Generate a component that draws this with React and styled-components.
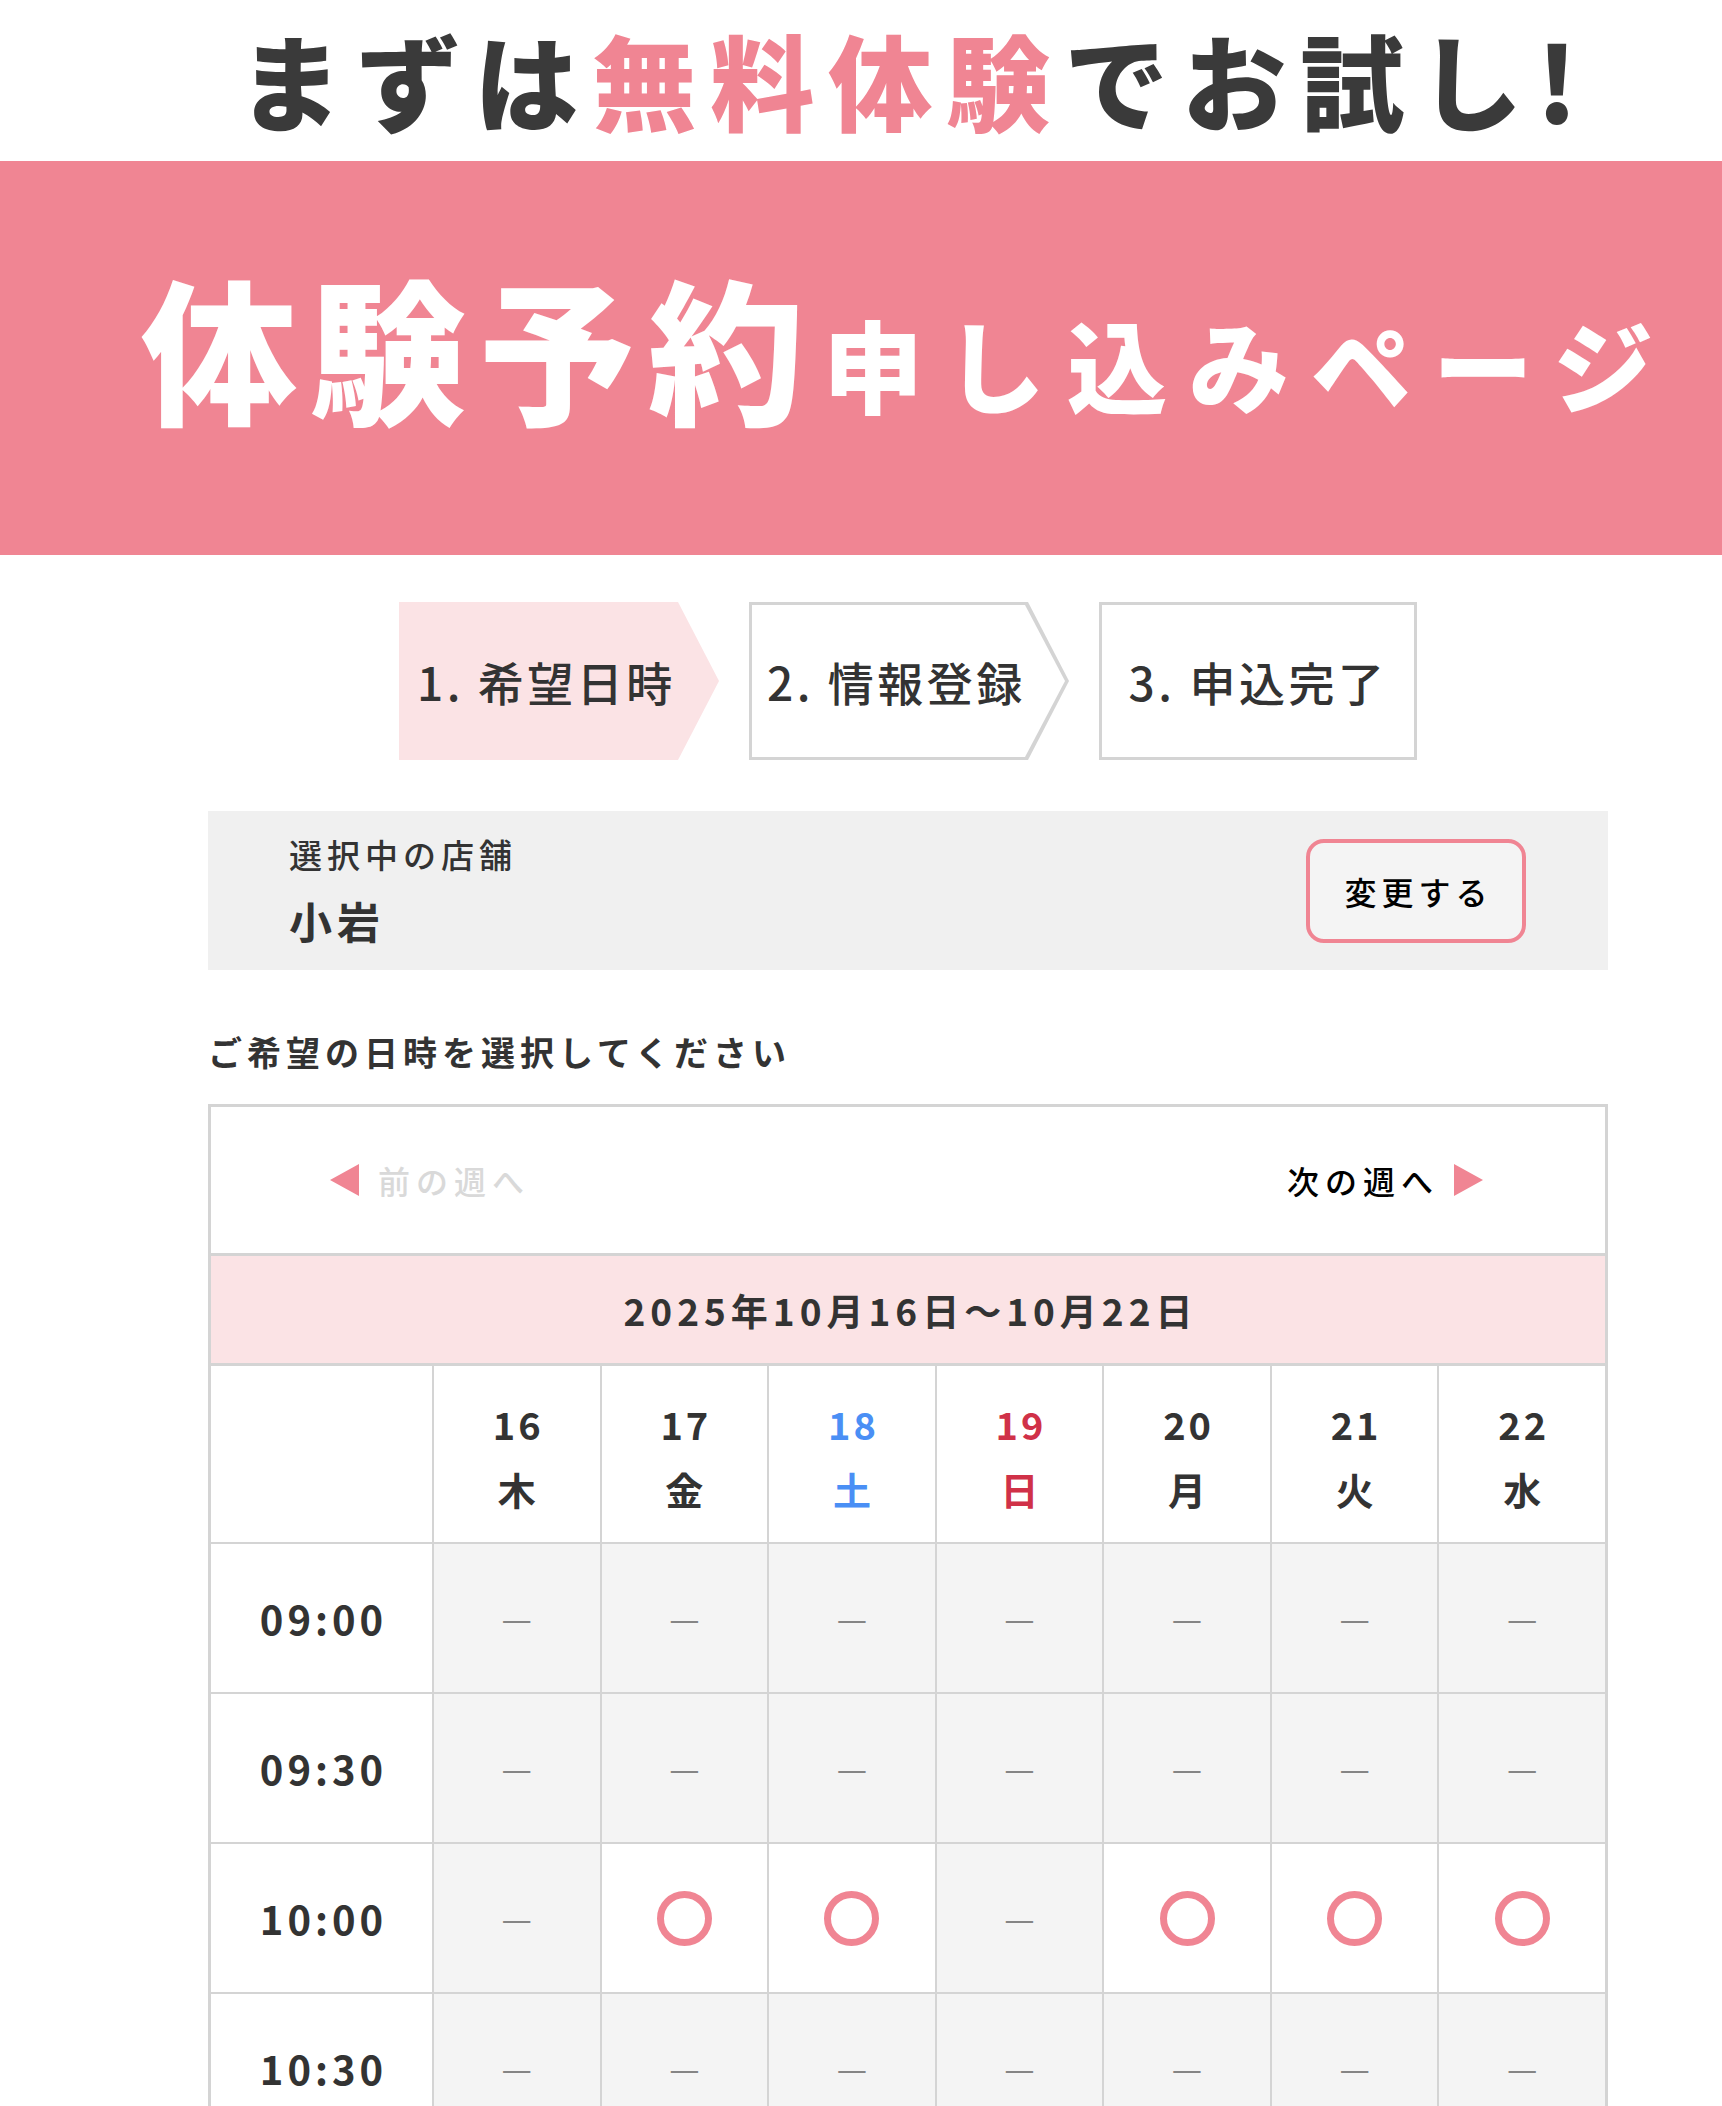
import React from 'react';
import styled, { createGlobalStyle, css } from 'styled-components';

const PINK = '#f08593';
const PINK_LIGHT = '#fbe3e5';
const TEXT = '#333333';
const LINE = '#d4d4d4';

const GlobalStyle = createGlobalStyle`
  * { box-sizing: border-box; }
  html, body { margin: 0; padding: 0; background: #fff; }
  body {
    font-family: "Noto Sans CJK JP", "Noto Sans", sans-serif;
    color: ${TEXT};
    overflow: hidden;
  }
`;

const Page = styled.div`
  width: 1722px;
`;

const Column = styled.div`
  width: 1400px;
  margin-left: 208px;
`;

const TopTitle = styled.h1`
  margin: 0;
  height: 161px;
  display: flex;
  align-items: center;
  justify-content: center;
  padding-left: 14px;
  padding-bottom: 4px;
  font-size: 104px;
  font-weight: 900;
  letter-spacing: 14px;
  line-height: 1;
  color: #3a3a3a;
  white-space: nowrap;
`;

const Accent = styled.span`
  color: ${PINK};
`;

const Banner = styled.div`
  height: 394px;
  background: ${PINK};
  display: flex;
  align-items: center;
  padding-left: 141px;
  padding-bottom: 26px;
`;

const BannerLine = styled.div`
  display: flex;
  align-items: baseline;
  color: #fff;
  font-weight: 900;
  line-height: 1;
  white-space: nowrap;
`;

const BannerBig = styled.span`
  font-size: 156px;
  letter-spacing: 13px;
`;

const BannerSmall = styled.span`
  position: relative;
  top: -7px;
  font-size: 100px;
  letter-spacing: 22px;
  margin-left: 6px;
`;

const Steps = styled.div`
  display: flex;
  justify-content: center;
  gap: 30px;
  margin-top: 47px;
`;

const arrow = (depth) =>
  `polygon(0 0, calc(100% - ${depth}px) 0, 100% 50%, calc(100% - ${depth}px) 100%, 0 100%)`;

const Step = styled.div`
  position: relative;
  width: 320px;
  height: 158px;
  display: flex;
  align-items: center;
  padding-left: 18px;
  font-size: 46px;
  font-weight: 500;
  letter-spacing: 3.5px;
  color: ${TEXT};
  white-space: nowrap;

  ${({ $kind }) =>
    $kind === 'current' &&
    css`
      background: ${PINK_LIGHT};
      clip-path: ${arrow(41)};
    `}

  ${({ $kind }) =>
    $kind === 'next' &&
    css`
      background: ${LINE};
      clip-path: ${arrow(41)};
      &::before {
        content: '';
        position: absolute;
        top: 3px;
        left: 3px;
        right: 4px;
        bottom: 3px;
        background: #fff;
        clip-path: ${arrow(40)};
      }
    `}

  ${({ $kind }) =>
    $kind === 'last' &&
    css`
      width: 318px;
      padding-left: 0;
      justify-content: center;
      border: 3px solid ${LINE};
      background: #fff;
    `}
`;

const StepLabel = styled.span`
  position: relative;
`;

const StorePanel = styled.div`
  margin-top: 51px;
  height: 159px;
  background: #f0f0f0;
  display: flex;
  align-items: center;
  justify-content: space-between;
  padding: 0 82px 0 81px;
`;

const StoreInfo = styled.div`
  display: flex;
  flex-direction: column;
  gap: 16px;
`;

const StoreCaption = styled.span`
  font-size: 33px;
  font-weight: 500;
  letter-spacing: 5px;
  line-height: 43px;
`;

const StoreName = styled.span`
  font-size: 43px;
  font-weight: 700;
  letter-spacing: 5px;
  line-height: 56px;
`;

const ChangeButton = styled.button`
  width: 220px;
  height: 104px;
  border: 4px solid ${PINK};
  border-radius: 18px;
  background: #f4f4f4;
  font-family: inherit;
  font-size: 32px;
  font-weight: 500;
  letter-spacing: 5px;
  color: #000;
  padding: 0 0 0 5px;
  cursor: pointer;
`;

const Prompt = styled.p`
  margin: 58px 0 0;
  font-size: 34px;
  font-weight: 700;
  letter-spacing: 5px;
  line-height: 48px;
  white-space: nowrap;
`;

const Calendar = styled.div`
  margin-top: 28px;
  border: 3px solid ${LINE};
  border-bottom: none;
`;

const WeekNav = styled.div`
  height: 146px;
  display: flex;
  align-items: center;
  justify-content: space-between;
  padding: 0 122px 0 119px;
`;

const NavLink = styled.div`
  display: flex;
  align-items: center;
  gap: 19px;
  font-size: 32px;
  font-weight: 500;
  letter-spacing: 6px;
  color: ${({ $disabled }) => ($disabled ? '#d9d9d9' : '#000')};
  white-space: nowrap;
`;

const Triangle = styled.span`
  width: 0;
  height: 0;
  border-top: 16px solid transparent;
  border-bottom: 16px solid transparent;
  ${({ $dir }) =>
    $dir === 'left'
      ? css`border-right: 29px solid ${PINK};`
      : css`border-left: 29px solid ${PINK}; margin-left: -4px;`}
`;

const RangeBar = styled.div`
  height: 110px;
  border-top: 3px solid ${LINE};
  background: ${PINK_LIGHT};
  display: flex;
  align-items: center;
  justify-content: center;
  font-size: 37px;
  font-weight: 700;
  letter-spacing: 5px;
  padding-left: 5px;
  white-space: nowrap;
`;

const Row = styled.div`
  display: grid;
  grid-template-columns: 221px repeat(7, 1fr);
  height: ${({ $head }) => ($head ? '179px' : '150px')};
  border-top: ${({ $head }) => ($head ? '3px' : '2px')} solid ${LINE};
`;

const Cell = styled.div`
  display: flex;
  flex-direction: column;
  align-items: center;
  justify-content: center;
  border-left: 2px solid ${LINE};
  background: ${({ $open }) => ($open ? '#fff' : '#f4f4f4')};
`;

const TimeCell = styled.div`
  display: flex;
  align-items: center;
  justify-content: center;
  font-size: 40px;
  font-weight: 700;
  letter-spacing: 4px;
  padding-left: 4px;
  background: #fff;
`;

const HeadCell = styled(Cell)`
  background: #fff;
  gap: 15px;
  padding-top: 4px;
  font-size: 38px;
  font-weight: 700;
  color: ${({ $tone }) =>
    $tone === 'sat' ? '#4a8ff5' : $tone === 'sun' ? '#d03148' : TEXT};
`;

const HeadLine = styled.span`
  line-height: 50px;
  letter-spacing: 3px;
  padding-left: 3px;
`;

const Dash = styled.span`
  font-size: 34px;
  line-height: 1;
  color: #858585;
`;

const OpenMark = styled.span`
  width: 55px;
  height: 55px;
  border: 7px solid ${PINK};
  border-radius: 50%;
`;

const days = [
  { num: 16, wd: '木' },
  { num: 17, wd: '金' },
  { num: 18, wd: '土', tone: 'sat' },
  { num: 19, wd: '日', tone: 'sun' },
  { num: 20, wd: '月' },
  { num: 21, wd: '火' },
  { num: 22, wd: '水' },
];

const slots = [
  { time: '09:00', open: [] },
  { time: '09:30', open: [] },
  { time: '10:00', open: [17, 18, 20, 21, 22] },
  { time: '10:30', open: [] },
];

const App = () => {
  return (
    <Page>
      <GlobalStyle />
      <Column>
        <TopTitle>
          まずは<Accent>無料体験</Accent>でお試し!
        </TopTitle>
      </Column>
      <Banner>
        <BannerLine>
          <BannerBig>体験予約</BannerBig>
          <BannerSmall>申し込みページ</BannerSmall>
        </BannerLine>
      </Banner>
      <Column>
        <Steps>
          <Step $kind="current">
            <StepLabel>1. 希望日時</StepLabel>
          </Step>
          <Step $kind="next">
            <StepLabel>2. 情報登録</StepLabel>
          </Step>
          <Step $kind="last">
            <StepLabel>3. 申込完了</StepLabel>
          </Step>
        </Steps>

        <StorePanel>
          <StoreInfo>
            <StoreCaption>選択中の店舗</StoreCaption>
            <StoreName>小岩</StoreName>
          </StoreInfo>
          <ChangeButton>変更する</ChangeButton>
        </StorePanel>

        <Prompt>ご希望の日時を選択してください</Prompt>

        <Calendar>
          <WeekNav>
            <NavLink $disabled>
              <Triangle $dir="left" />
              前の週へ
            </NavLink>
            <NavLink>
              次の週へ
              <Triangle $dir="right" />
            </NavLink>
          </WeekNav>
          <RangeBar>2025年10月16日〜10月22日</RangeBar>
          <Row $head>
            <TimeCell />
            {days.map((d) => (
              <HeadCell key={d.num} $tone={d.tone}>
                <HeadLine>{d.num}</HeadLine>
                <HeadLine>{d.wd}</HeadLine>
              </HeadCell>
            ))}
          </Row>
          {slots.map((s) => (
            <Row key={s.time}>
              <TimeCell>{s.time}</TimeCell>
              {days.map((d) => {
                const open = s.open.includes(d.num);
                return (
                  <Cell key={d.num} $open={open}>
                    {open ? <OpenMark /> : <Dash>—</Dash>}
                  </Cell>
                );
              })}
            </Row>
          ))}
        </Calendar>
      </Column>
    </Page>
  );
};

export default App;
